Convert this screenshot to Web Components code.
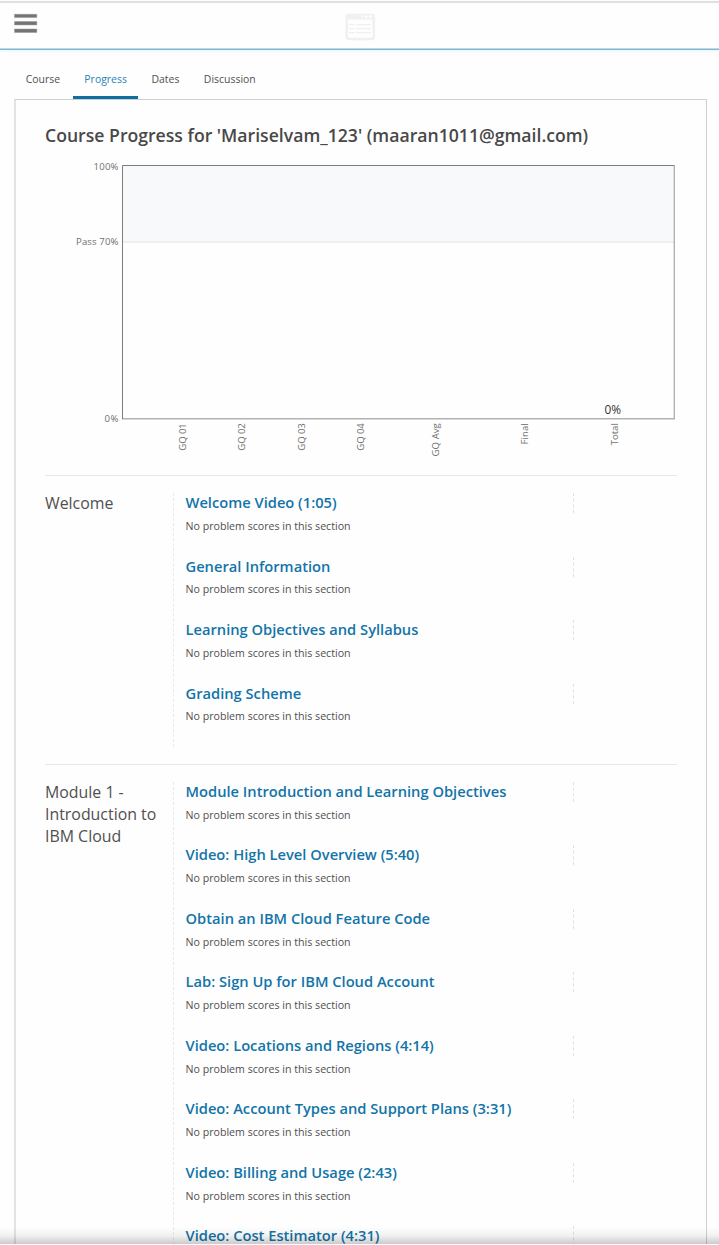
<!DOCTYPE html>
<html lang="en">
<head>
<meta charset="utf-8">
<title>Course Progress</title>
<style>
html,body{margin:0;padding:0;background:#fefefe}
body{font-family:"Open Sans","Noto Sans",sans-serif;color:#4a4a4a}
</style>
</head>
<body>
<progress-page></progress-page>
<script>
const define = (name, html, init) => customElements.define(name, class extends HTMLElement {
  constructor() {
    super();
    this.attachShadow({ mode: 'open' }).innerHTML = html;
  }
  connectedCallback() { if (init) init.call(this, this.shadowRoot); }
});

define('site-header', `
<style>
:host{display:grid;grid-template-columns:1fr 30px 1fr;box-sizing:border-box;height:49px;border-top:2px solid #e0e0e0;margin-top:1px;border-bottom:1px solid #87b3cf;box-shadow:inset 0 -1px #b4dcef,0 1px 3px #e8f4fb;background:#fefefe}
.menu{display:block;margin:10px 0 0 14px}
.logo{display:block;margin-top:10px}
</style>
<svg class="menu" width="24" height="22" fill="#747474" stroke="#999" stroke-width=".5"><path d="M.5 1.3h22.3v3.3H.5zM.5 8.6h22.3v3.3H.5zM.5 16h22.3v3.5H.5z"/></svg>
<svg class="logo" width="31" height="28"><rect x="1.8" y="2" width="27" height="24" rx="2" fill="none" stroke="#f0f0f0" stroke-width="2.6"/><path d="M1.5 1.2h27.5v5.3H1.5z" fill="#f1f1f1"/><path d="M16.5 2.5h2v2h-2zM20 2.5h2.5v2H20zM24 2.5h3v2H24z" fill="#fff"/><path d="M4 11.6h5.5M11 11.6h15M4 15.6h5.5M11 15.6h15M4 19.6h5.5M11 19.6h15" stroke="#f0f0f0" stroke-width="1.4"/></svg>`);

define('nav-tab', `
<style>
:host{display:block;box-sizing:border-box;height:49px;padding:21px 11px 0;font-size:10.45px;line-height:16px;color:#505050;border-bottom:3px solid transparent}
:host([active]){color:#2783b5;border-color:#106ea0;margin-left:2.3px}
</style><slot></slot>`);

define('tab-bar', `
<style>
:host{display:flex;height:49px;padding-left:14.7px}
</style><slot></slot>`);

define('grade-chart', `
<style>
:host{display:block;height:325px}
svg{display:block;font-family:"Open Sans",sans-serif;font-size:9.6px;fill:#707070}
</style>
<svg width="632" height="310">
<rect x="78" y="16" width="551" height="76" fill="#f7f9fb"/>
<path d="M78 92.1H629" stroke="#e8e8e8" stroke-width="1.3"/>
<path d="M77 268.8H629.3V15" fill="none" stroke="#b2b2b2" stroke-width="1.4"/>
<path d="M77.5 269V15.5H629" fill="none" stroke="#7c7c7c"/>
<g text-anchor="end"><text x="73.5" y="19.7" textLength="25">100%</text><text x="73.5" y="95" textLength="42.5">Pass 70%</text><text x="73.5" y="272" textLength="14">0%</text></g>
<g id="labels"></g>
<text x="559.5" y="263.7" textLength="16.5" lengthAdjust="spacingAndGlyphs" font-size="12" fill="#333">0%</text>
</svg>`, function (root) {
  const items = [['GQ 01',140.5,27.5],['GQ 02',200,27.5],['GQ 03',259.5,27.5],['GQ 04',319,27.5],['GQ Avg',394,33.2],['Final',482.5,21.2],['Total',573,22]];
  root.getElementById('labels').innerHTML = items.map(([t, x, w]) =>
    `<text transform="translate(${x} ${273.2 + w}) rotate(-90)" textLength="${w}">${t}</text>`).join('');
});

define('course-lesson', `
<style>
:host{display:grid;grid-template-columns:387px 1fr;height:63.5px}
a{display:block;margin-top:-.7px;font-weight:600;font-size:14.7px;line-height:20px;color:#1274a8;white-space:nowrap}
p{margin:5.6px 0 0;font-size:10.63px;line-height:16px;color:#4e4e4e}
:host([title-only]) p{display:none}
i{display:block;height:20px;width:0;border-left:1px dashed #e0e0e0}
</style>
<div><a><slot></slot></a><p>No problem scores in this section</p></div><i></i>`);

define('course-chapter', `
<style>
:host{display:grid;grid-template-columns:128px 1fr;box-sizing:border-box;border-top:1px solid #e8e8e8;padding:17px 0 16.6px}
h2{margin:-.6px 0 0;font-weight:400;font-size:15.9px;line-height:22px;color:#505050;width:118px}
div{border-left:1px dashed #e9e9e9;padding-left:11.5px}
</style>
<h2><slot name="title"></slot></h2><div><slot></slot></div>`);

define('progress-panel', `
<style>
:host{display:block;box-sizing:border-box;margin:0 12px 0 14px;width:693px;border:1px solid #cfcfcf;border-left:2px solid #e3e3e3;border-bottom:0;padding:23px 29.5px 0 29px;background:#fefefe}
h1{margin:0;font-weight:600;font-size:17.64px;line-height:24px;height:27px;color:#484848;white-space:nowrap}
</style>
<h1><slot name="heading"></slot></h1><slot></slot>`);

define('progress-page', `
<style>
:host{display:block;position:relative;height:1244px;overflow:hidden}
.shade{position:absolute;inset:auto 0 0;height:17px;background:linear-gradient(transparent,rgba(0,0,0,.05) 50%,rgba(0,0,0,.2))}
</style>
<site-header></site-header>
<tab-bar><nav-tab>Course</nav-tab><nav-tab active>Progress</nav-tab><nav-tab style="padding-left:13.5px">Dates</nav-tab><nav-tab style="padding-left:13.5px">Discussion</nav-tab></tab-bar>
<progress-panel>
<span slot="heading">Course Progress for 'Mariselvam_123' (maaran1011@gmail.com)</span>
<grade-chart></grade-chart>
<course-chapter><span slot="title">Welcome</span>
<course-lesson>Welcome Video (1:05)</course-lesson>
<course-lesson>General Information</course-lesson>
<course-lesson>Learning Objectives and Syllabus</course-lesson>
<course-lesson>Grading Scheme</course-lesson>
</course-chapter>
<course-chapter><span slot="title">Module 1 - Introduction to IBM Cloud</span>
<course-lesson>Module Introduction and Learning Objectives</course-lesson>
<course-lesson>Video: High Level Overview (5:40)</course-lesson>
<course-lesson>Obtain an IBM Cloud Feature Code</course-lesson>
<course-lesson>Lab: Sign Up for IBM Cloud Account</course-lesson>
<course-lesson>Video: Locations and Regions (4:14)</course-lesson>
<course-lesson>Video: Account Types and Support Plans (3:31)</course-lesson>
<course-lesson>Video: Billing and Usage (2:43)</course-lesson>
<course-lesson title-only>Video: Cost Estimator (4:31)</course-lesson>
</course-chapter>
</progress-panel>
<div class="shade"></div>`);
</script>
</body>
</html>
